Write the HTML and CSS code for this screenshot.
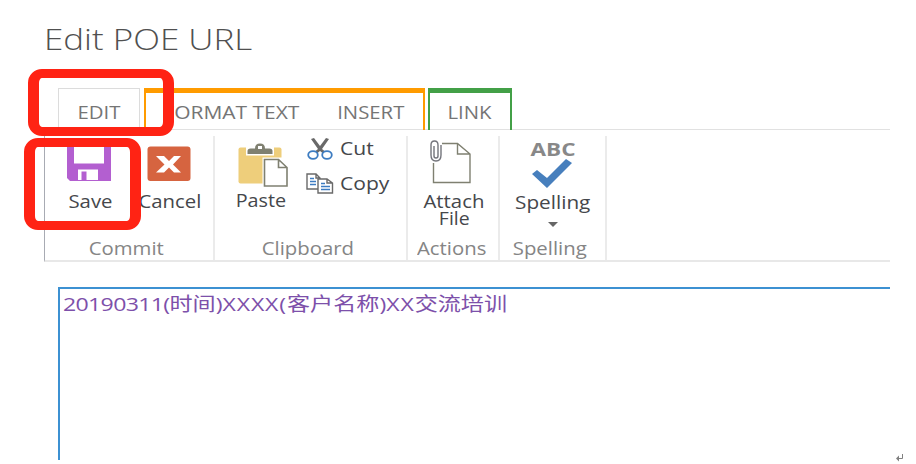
FILE: index.html
```
<!DOCTYPE html>
<html lang="en">
<head>
<meta charset="utf-8">
<title>Edit POE URL</title>
<link rel="stylesheet" href="styles.css">
</head>
<body>
<main class="page">
  <h1 class="title"><span>Edit POE URL</span></h1>
  <nav class="tabs">
    <div class="tab tab-edit"><span>EDIT</span></div>
    <div class="tab-set tab-set-text">
      <div class="tab tab-format"><span>FORMAT TEXT</span></div>
      <div class="tab tab-insert"><span>INSERT</span></div>
    </div>
    <div class="tab-set tab-set-link"><div class="tab tab-link"><span>LINK</span></div></div>
  </nav>
  <section class="ribbon">
    <div class="group commit">
      <div class="tools">
        <div class="tool save">
          <svg width="46" height="46" viewBox="0 0 46 46"><path fill="#b35fd0" d="M0 0h44v38H3l-3-3z"/><path fill="#fff" d="M7 0h30v20.500H7zM11 26.500h20V37H11z"/><path fill="#b35fd0" d="M14.500 28.500h5V37h-5z"/></svg>
          <span>Save</span>
        </div>
        <div class="tool cancel">
          <svg width="46" height="46" viewBox="0 0 46 46"><rect x=".5" y="3.500" width="43" height="34.500" rx="3" fill="#d66440"/><path fill="#fff" d="M9 13h8l5 5 5-5h7l-8 8.500 8 8h-7l-5-5-5 5H9l8.500-8z"/></svg>
          <span>Cancel</span>
        </div>
      </div>
      <div class="label"><span>Commit</span></div>
    </div>
    <div class="group clipboard">
      <div class="tools">
        <div class="tool paste">
          <svg width="56" height="46" viewBox="0 0 56 46"><rect x="5.500" y="5.500" width="43" height="36" rx="2" fill="#eece7b"/><path fill="#fff" d="M13 4h28v9.500H13zM29.500 15.500H56V46H29.500z"/><path fill="#7f8071" d="M14.500 12V9q0-2.500 3-2.500h4.500q0-5 5-5t5 5h4.500q3 0 3 2.500v3z"/><path fill="#fff" d="M25 4h4v3h-4z"/><path d="M31.500 17.500h14l8.500 8V44H31.500zM45.500 17.500v8H54" fill="#fff" stroke="#7f8071" stroke-width="1.600"/></svg>
          <span>Paste</span>
        </div>
        <div class="small-tools">
          <div class="small cut">
            <svg width="28" height="25" viewBox="0 0 28 25"><path fill="#696969" d="M5 3l3-1 6 8 6-8 3 1-7 10 5 4-2 2-5-4-5 4-2-2 5-4z"/><g fill="#fff" stroke="#3d7cc1" stroke-width="1.800"><ellipse cx="7" cy="19" rx="4.800" ry="3.800"/><ellipse cx="21" cy="19" rx="4.800" ry="3.800"/></g></svg>
            <span>Cut</span>
          </div>
          <div class="small copy">
            <svg width="28" height="24" viewBox="0 0 28 24"><g fill="#fff" stroke="#696969" stroke-width="1.400"><path d="M1 3h9l4 4v11H1zM10 3v4h4"/><path d="M12 8h9l5.500 4v10H12zM21 8v4h5.500"/></g><path d="M4 7.500h4M4 10.500h6M4 13.500h6M15 12.500h4M15 15.500h9M15 18.500h9" stroke="#3d7cc1" stroke-width="1.400"/></svg>
            <span>Copy</span>
          </div>
        </div>
      </div>
      <div class="label"><span>Clipboard</span></div>
    </div>
    <div class="group actions">
      <div class="tools">
        <div class="tool attach">
          <svg width="46" height="48" viewBox="0 0 46 48"><path d="M3.500 6.500h24l12.500 10.500v28.500H3.500zM27.500 6.500V17H40" fill="#fff" stroke="#7f8071" stroke-width="1.400"/><path d="M0 1h12v25H0z" fill="#fff"/><path d="M4 9v10q0 2 2 2t2-2V8q0-4-3.500-4T1 8v10q0 6 5 6t5-6V8" fill="none" stroke="#73747b" stroke-width="1.400"/></svg>
          <span class="line-one">Attach</span>
          <span class="line-two">File</span>
        </div>
      </div>
      <div class="label"><span>Actions</span></div>
    </div>
    <div class="group spelling">
      <div class="tools">
        <div class="tool spell">
          <span class="abc">ABC</span>
          <svg width="42" height="31" viewBox="0 0 42 31"><path fill="#477fbd" d="M0 15l5-4 10 8L34 0l6 4-25 25z"/></svg>
          <span class="spell-name">Spelling</span>
          <i class="arrow"></i>
        </div>
      </div>
      <div class="label"><span>Spelling</span></div>
    </div>
  </section>
  <section class="editor"><span><b class="digits">20190311(</b>时间)<b class="letters">XXXX(</b>客户名称)<b class="letters">XX</b>交流培训</span></section>
</main>
<div class="mark mark-tab"></div>
<div class="mark mark-save"></div>
<svg class="return" width="9" height="8" viewBox="0 0 9 8"><path d="M6.500 0v4.500H2" fill="none" stroke="#808080"/><path d="M0 4.500L3 1.500v6z" fill="#808080"/></svg>
</body>
</html>
```
FILE: styles.css
```
* { box-sizing: border-box; }
body {
  margin: 0;
  height: 464px;
  overflow: hidden;
  position: relative;
  background: #fff;
  font-family: "Open Sans", "Noto Sans CJK SC", sans-serif;
  font-size: 18px;
  line-height: 24px;
  color: #45474b;
}
span { display: inline-block; white-space: nowrap; transform: scaleX(1.13); }
svg { display: block; flex: none; }
.page { width: 890px; padding-left: 44px; }
.title { margin: 0; height: 88px; padding-top: 19px; font-size: 30px; line-height: 40px; font-weight: 300; color: #505050; }
.title span { transform: scaleX(1.165); transform-origin: left; }

.tabs { display: flex; height: 42px; border-bottom: 1px solid #e1e1e1; padding-left: 14px; color: #757575; }
.tab { display: flex; justify-content: center; padding-top: 11px; }
.tab-edit { width: 82px; border: 1px solid #dcdcdc; border-bottom: 0; margin-right: 4px; }
.tab-set { display: flex; height: 42px; border: 2px solid #ff9b00; border-top-width: 5px; border-bottom: 0; }
.tab-set .tab { padding-top: 7px; }
.tab-set-text { width: 281px; margin-right: 3px; }
.tab-format { width: 170px; }
.tab-format span { transform: scaleX(1.165); }
.tab-insert { width: 106px; padding-left: 3px; }
.tab-set-link { width: 84px; border-color: #43a047; }
.tab-link { width: 80px; padding-right: 1px; }

.ribbon { display: flex; height: 132px; border-left: 1px solid #a8abb3; border-bottom: 2px solid #e8e8e8; }
.group { display: flex; flex-direction: column; margin-top: 6px; border-right: 2px solid #ebebeb; }
.commit { width: 170px; }
.clipboard { width: 193px; }
.actions { width: 92px; }
.spelling { width: 107px; }
.tools { display: flex; height: 100px; }
.label { display: flex; justify-content: center; padding-right: 5px; color: #858585; }
.actions .label { padding-right: 2px; }
.tool { display: flex; flex-direction: column; align-items: center; }
.save { width: 90px; padding-top: 7px; }
.cancel { width: 69px; padding-top: 7px; }
.paste { width: 91px; padding-top: 6px; }
.paste span { transform: scaleX(1.1); }
.attach { width: 91px; padding-top: 1px; }
.line-one { margin: 7px 0 0 2px; line-height: 19px; }
.line-two { margin-left: 2px; line-height: 15px; transform: scaleX(1.08); }
.spell { width: 105px; }
.spell-name { transform: scaleX(1.15); }
.abc { font-weight: 700; color: #888; line-height: 27px; height: 23px; transform: scaleX(1.25); }
.arrow { margin-top: 8px; border: 5px solid transparent; border-top-color: #666; border-bottom: 0; }
.small { display: flex; gap: 6px; height: 35px; }
.small span { transform: scaleX(1.17); transform-origin: left; }

.editor { margin: 25px 0 0 14px; height: 173px; border: 2px solid #3c91d2; border-right: 0; border-bottom: 0; padding: 3px 0 0 3px; color: #7d50aa; font-size: 19px; }
.editor span { transform: scaleX(1.216); transform-origin: left; }
.editor b { font-weight: 400; }
.digits { letter-spacing: -.55px; }
.letters { letter-spacing: .7px; }

.mark { position: absolute; border: 9px solid #ff2314; border-left-width: 11px; border-right-width: 11px; border-radius: 14px; }
.mark-tab { left: 28px; top: 69px; width: 146px; height: 67px; }
.mark-save { left: 24px; top: 138px; width: 117px; height: 92px; }
.return { position: absolute; left: 896px; top: 454px; }
```
